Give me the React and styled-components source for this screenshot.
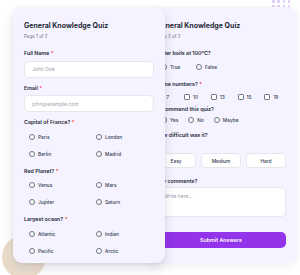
import React from "react";
import styled, { createGlobalStyle } from "styled-components";

const GlobalStyle = createGlobalStyle`
  body {
    margin: 0;
    background: #ffffff;
    font-family: Inter, "Noto Sans", sans-serif;
  }
`;

const Stage = styled.div`
  position: relative;
  width: 300px;
  height: 275px;
  overflow: hidden;
  box-sizing: border-box;
  padding: 7px 0 0 13px;
  display: grid;
  grid-template-columns: 132px 20px 132px;
  align-items: start;
`;

const Dots = styled.div`
  position: absolute;
  top: -10px;
  left: 272px;
  display: grid;
  grid-template-columns: repeat(4, 2.6px);
  column-gap: 2.7px;
  row-gap: 2.4px;
`;

const Dot = styled.span`
  width: 2.6px;
  height: 2.6px;
  border-radius: 0.8px;
  background: #e0cbf8;
`;

const Blob = styled.div`
  position: absolute;
  left: 2px;
  top: 235px;
  width: 44px;
  height: 44px;
  border-radius: 50%;
  background: radial-gradient(circle at 55% 45%, #f1e7da 0%, #e6d6c1 100%);
`;

const Card = styled.section`
  position: relative;
  grid-row: 1;
  grid-column: ${(p) => (p.$front ? "1 / 3" : "2 / 4")};
  z-index: ${(p) => (p.$front ? 2 : 1)};
  height: 256px;
  box-sizing: border-box;
  padding: 13px 11px 0;
  background: #f5f3ff;
  border-radius: 9px;
  overflow: hidden;
  box-shadow: ${(p) =>
    p.$front
      ? "0 5px 12px rgba(40, 30, 70, 0.14), 0 1px 3px rgba(40, 30, 70, 0.06)"
      : "0 3px 8px rgba(40, 30, 70, 0.07)"};
`;

const Title = styled.h2`
  margin: 0;
  font-size: 7px;
  line-height: 11px;
  font-weight: 700;
  color: #1f2937;
  white-space: nowrap;
`;

const Sub = styled.p`
  margin: 2px 0 0;
  font-size: 4.5px;
  line-height: 7px;
  color: #6b7280;
`;

const Form = styled.div`
  margin-top: 10px;
  display: flex;
  flex-direction: column;
  gap: ${(p) => p.$gap}px;
`;

const Field = styled.div`
  display: flex;
  flex-direction: column;
  gap: ${(p) => p.$gap ?? 3.5}px;
  margin-top: ${(p) => p.$mt ?? 0}px;
`;

const Label = styled.div`
  font-size: 5.3px;
  line-height: 7px;
  font-weight: 600;
  color: #1f2937;
  white-space: nowrap;
`;

const Req = styled.span`
  color: #ef4444;
  margin-left: 1.5px;
`;

const Input = styled.input`
  height: 17px;
  box-sizing: border-box;
  border: 0.6px solid #e5e7eb;
  border-radius: 5px;
  background: #ffffff;
  padding: 0 7px;
  font-family: inherit;
  font-size: 5px;
  color: #1f2937;
  outline: none;
  &::placeholder {
    color: #9ca3af;
  }
`;

const TextArea = styled.textarea`
  height: 30px;
  box-sizing: border-box;
  border: 0.6px solid #e5e7eb;
  border-radius: 5px;
  background: #ffffff;
  padding: 5px 7px;
  font-family: inherit;
  font-size: 5px;
  line-height: 7px;
  resize: none;
  outline: none;
  &::placeholder {
    color: #9ca3af;
  }
`;

const OptionGrid = styled.div`
  display: grid;
  grid-template-columns: 1fr 1fr;
  column-gap: 4px;
  row-gap: 3px;
`;

const OptionRow = styled.div`
  display: flex;
  gap: ${(p) => p.$gap}px;
`;

const Option = styled.label`
  display: flex;
  align-items: center;
  gap: 3px;
  height: ${(p) => p.$h ?? 14}px;
  padding: 0 5px;
  font-size: 4.8px;
  font-weight: 500;
  color: #374151;
  white-space: nowrap;
`;

const Radio = styled.span`
  flex-shrink: 0;
  width: 6px;
  height: 6px;
  box-sizing: border-box;
  border-radius: 50%;
  border: 0.8px solid #6b7280;
  background: #ffffff;
`;

const CheckGrid = styled.div`
  display: grid;
  grid-template-columns: repeat(5, 1fr);
  column-gap: 4px;
`;

const CheckItem = styled.label`
  display: flex;
  align-items: center;
  gap: 3px;
  height: 8px;
  padding-left: 1.2px;
  font-size: 4.8px;
  font-weight: 500;
  color: #374151;
`;

const Box = styled.span`
  flex-shrink: 0;
  width: 6px;
  height: 6px;
  box-sizing: border-box;
  border-radius: 1.2px;
  border: 0.8px solid #6b7280;
  background: #ffffff;
`;

const Choices = styled.div`
  display: grid;
  grid-template-columns: repeat(3, 1fr);
  gap: 5px;
`;

const Choice = styled.button`
  height: 15px;
  border: 0.6px solid #e5e7eb;
  border-radius: 4px;
  background: #ffffff;
  font-family: inherit;
  font-size: 4.8px;
  font-weight: 500;
  color: #374151;
  padding: 0;
`;

const Submit = styled.button`
  margin-top: 15px;
  width: 100%;
  height: 16px;
  border: none;
  border-radius: 5px;
  background: #9333ea;
  color: #ffffff;
  font-family: inherit;
  font-size: 5.3px;
  font-weight: 600;
  padding: 0;
`;

const RadioField = ({ label, options }) => (
  <Field>
    <Label>
      {label}
      <Req>*</Req>
    </Label>
    <OptionGrid>
      {options.map((o) => (
        <Option key={o}>
          <Radio />
          {o}
        </Option>
      ))}
    </OptionGrid>
  </Field>
);

const Header = ({ page }) => (
  <>
    <Title>General Knowledge Quiz</Title>
    <Sub>Page {page} of 2</Sub>
  </>
);

export default function App() {
  return (
    <>
      <GlobalStyle />
      <Stage>
        <Dots>
          {Array.from({ length: 16 }).map((_, i) => (
            <Dot key={i} />
          ))}
        </Dots>
        <Blob />

        <Card>
          <Header page={2} />
          <Form $gap={0}>
            <Field $gap={4}>
              <Label>Water boils at 100°C?</Label>
              <OptionRow $gap={5.5}>
                <Option $h={12}>
                  <Radio />
                  True
                </Option>
                <Option $h={12}>
                  <Radio />
                  False
                </Option>
              </OptionRow>
            </Field>
            <Field $mt={8} $gap={5}>
              <Label>
                Prime numbers?<Req>*</Req>
              </Label>
              <CheckGrid>
                {["7", "10", "13", "15", "19"].map((n) => (
                  <CheckItem key={n}>
                    <Box />
                    {n}
                  </CheckItem>
                ))}
              </CheckGrid>
            </Field>
            <Field $mt={4.5} $gap={1}>
              <Label>Recommend this quiz?</Label>
              <OptionRow $gap={0}>
                {["Yes", "No", "Maybe"].map((o) => (
                  <Option key={o} $h={12}>
                    <Radio />
                    {o}
                  </Option>
                ))}
              </OptionRow>
            </Field>
            <Field $mt={6} $gap={14.5}>
              <Label>How difficult was it?</Label>
              <Choices>
                <Choice>Easy</Choice>
                <Choice>Medium</Choice>
                <Choice>Hard</Choice>
              </Choices>
            </Field>
            <Field $mt={9.5} $gap={2.5}>
              <Label>Any comments?</Label>
              <TextArea placeholder="Write here..." />
            </Field>
            <Submit>Submit Answers</Submit>
          </Form>
        </Card>

        <Card $front>
          <Header page={1} />
          <Form $gap={7}>
            <Field>
              <Label>
                Full Name<Req>*</Req>
              </Label>
              <Input placeholder="John Doe" />
            </Field>
            <Field>
              <Label>
                Email<Req>*</Req>
              </Label>
              <Input placeholder="john@example.com" />
            </Field>
            <RadioField
              label="Capital of France?"
              options={["Paris", "London", "Berlin", "Madrid"]}
            />
            <RadioField
              label="Red Planet?"
              options={["Venus", "Mars", "Jupiter", "Saturn"]}
            />
            <RadioField
              label="Largest ocean?"
              options={["Atlantic", "Indian", "Pacific", "Arctic"]}
            />
          </Form>
        </Card>
      </Stage>
    </>
  );
}
